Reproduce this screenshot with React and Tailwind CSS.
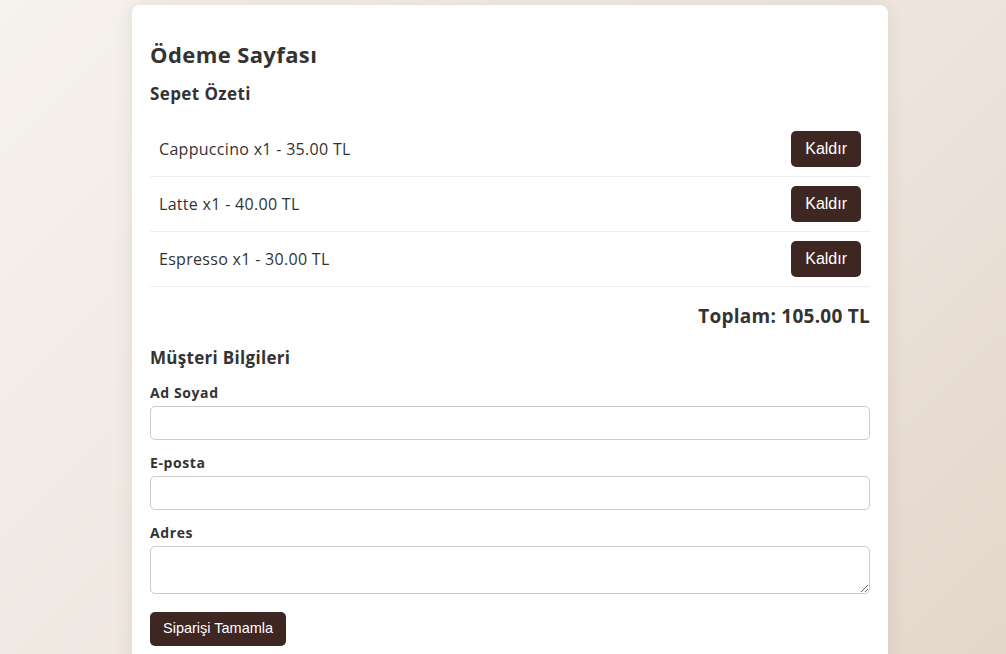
import React from "react";

const items = [
  { name: "Cappuccino", qty: 1, price: "35.00" },
  { name: "Latte", qty: 1, price: "40.00" },
  { name: "Espresso", qty: 1, price: "30.00" },
];

export default function App() {
  return (
    <div
      className="min-h-[654px] w-full bg-[linear-gradient(135deg,#f6f2ee_0%,#efe7e0_50%,#e4d6ca_100%)] pl-[14px] pt-[5px] text-[#333]"
      style={{ fontFamily: '"Open Sans", "Liberation Sans", sans-serif' }}
    >
      <div className="mx-auto w-[756px] rounded-[8px] bg-white px-[18px] pt-[35px] pb-[30px] shadow-[0_0_18px_rgba(80,60,40,0.10)]">
        <h1 className="text-[22px] font-bold leading-[28px] tracking-[0.4px]">Ödeme Sayfası</h1>
        <h2 className="mt-[15px] text-[17px] font-bold leading-[22px] tracking-[0.4px]">Sepet Özeti</h2>
        <ul className="mt-[17px]">
          {items.map((it) => (
            <li
              key={it.name}
              className="flex items-center justify-between border-b border-[#eeeeee] px-[9px] py-[9px]"
            >
              <span className="text-[16px] leading-[24px] tracking-[0.3px] text-[#333]">
                {it.name} x{it.qty} - {it.price} TL
              </span>
              <button
                className="h-[36px] rounded-[5px] bg-[#3e2723] px-[14px] text-[16px] text-white"
                style={{ fontFamily: '"Liberation Sans", Arial, sans-serif' }}
              >
                Kaldır
              </button>
            </li>
          ))}
        </ul>
        <div className="mt-[16px] text-right text-[19px] font-bold leading-[26px] tracking-[0.25px]">
          Toplam: 105.00 TL
        </div>
        <h2 className="mt-[18px] text-[17px] font-bold leading-[22px] tracking-[0.3px]">Müşteri Bilgileri</h2>
        <form className="mt-[15px]" onSubmit={(e) => e.preventDefault()}>
          <label className="block text-[14px] font-bold leading-[18px] tracking-[0.6px]">Ad Soyad</label>
          <input
            type="text"
            className="mt-[4px] block h-[34px] w-full rounded-[5px] border border-[#cccccc] px-[8px] outline-none"
          />
          <label className="mt-[14px] block text-[14px] font-bold leading-[18px] tracking-[0.6px]">E-posta</label>
          <input
            type="email"
            className="mt-[4px] block h-[34px] w-full rounded-[5px] border border-[#cccccc] px-[8px] outline-none"
          />
          <label className="mt-[14px] block text-[14px] font-bold leading-[18px] tracking-[0.6px]">Adres</label>
          <textarea className="mt-[4px] block h-[48px] w-full rounded-[5px] border border-[#cccccc] px-[8px] outline-none" />
          <button
            type="submit"
            className="mt-[18px] h-[34px] rounded-[5px] bg-[#3e2723] px-[13px] text-[14.5px] text-white"
            style={{ fontFamily: '"Liberation Sans", Arial, sans-serif' }}
          >
            Siparişi Tamamla
          </button>
        </form>
      </div>
    </div>
  );
}
